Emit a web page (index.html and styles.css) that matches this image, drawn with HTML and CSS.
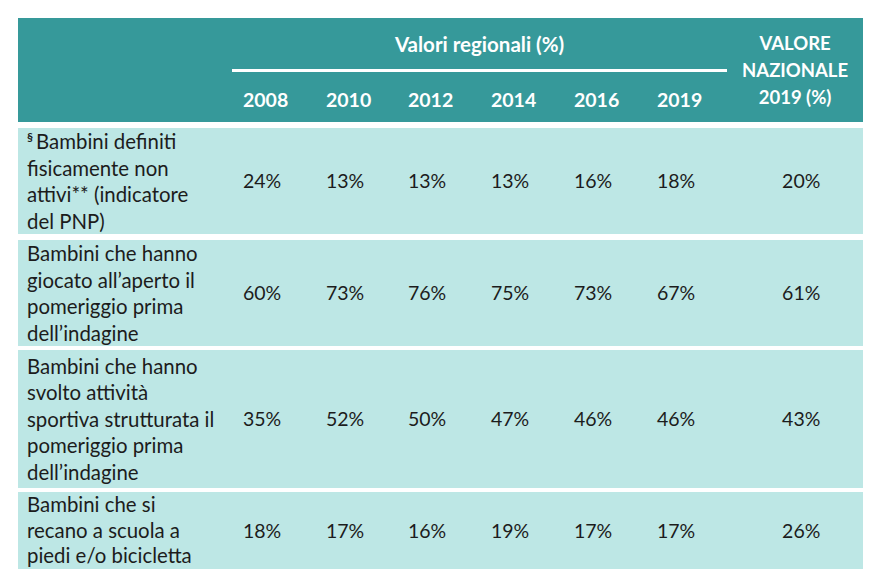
FILE: index.html
```html
<!DOCTYPE html>
<html lang="it">
<head>
<meta charset="utf-8">
<title>Tabella attività fisica</title>
<link rel="stylesheet" href="styles.css">
</head>
<body>
<table class="data">
  <colgroup>
    <col class="c-label">
    <col class="c-y1"><col class="c-y2"><col class="c-y3"><col class="c-y4"><col class="c-y5"><col class="c-y6">
    <col class="c-nat">
  </colgroup>
  <thead>
    <tr class="h-top">
      <th class="h-blank" rowspan="2"></th>
      <th class="h-group" colspan="6">Valori regionali (%)</th>
      <th class="h-nat" rowspan="2">VALORE<br>NAZIONALE<br>2019 (%)</th>
    </tr>
    <tr class="h-years">
      <th class="yr">2008</th>
      <th class="yr">2010</th>
      <th class="yr">2012</th>
      <th class="yr">2014</th>
      <th class="yr">2016</th>
      <th class="yr">2019</th>
    </tr>
  </thead>
  <tbody>
    <tr class="r1">
      <td class="lbl"><span class="sect">§</span><span class="lbl-text">Bambini definiti fisicamente non attivi** (indicatore del PNP)</span></td>
      <td class="val">24%</td><td class="val">13%</td><td class="val">13%</td><td class="val">13%</td><td class="val">16%</td><td class="val">18%</td>
      <td class="val nat">20%</td>
    </tr>
    <tr class="r2">
      <td class="lbl">Bambini che hanno giocato all’aperto il pomeriggio prima dell’indagine</td>
      <td class="val">60%</td><td class="val">73%</td><td class="val">76%</td><td class="val">75%</td><td class="val">73%</td><td class="val">67%</td>
      <td class="val nat">61%</td>
    </tr>
    <tr class="r3">
      <td class="lbl">Bambini che hanno svolto attività sportiva strutturata il pomeriggio prima dell’indagine</td>
      <td class="val">35%</td><td class="val">52%</td><td class="val">50%</td><td class="val">47%</td><td class="val">46%</td><td class="val">46%</td>
      <td class="val nat">43%</td>
    </tr>
    <tr class="r4">
      <td class="lbl">Bambini che si recano a scuola a piedi e/o bicicletta</td>
      <td class="val">18%</td><td class="val">17%</td><td class="val">16%</td><td class="val">19%</td><td class="val">17%</td><td class="val">17%</td>
      <td class="val nat">26%</td>
    </tr>
  </tbody>
</table>
</body>
</html>
```

FILE: styles.css
```css
html, body {
  margin: 0;
  padding: 0;
  background: #ffffff;
}

body {
  font-family: "Lato", "Open Sans", "Liberation Sans", sans-serif;
  color: #1c1c1c;
}

.data {
  margin: 18px 0 0 18px;
  width: 845px;
  table-layout: fixed;
  border-collapse: separate;
  border-spacing: 0;
}

.c-label { width: 214px; }
.c-y1 { width: 83px; }
.c-y2 { width: 82px; }
.c-y3 { width: 83px; }
.c-y4 { width: 83px; }
.c-y5 { width: 83px; }
.c-y6 { width: 81px; }
.c-nat { width: 136px; }

.data th,
.data td {
  padding: 0;
  vertical-align: middle;
}

.data thead th {
  background: #36999a;
  color: #ffffff;
  font-weight: 700;
}

.h-top { height: 54px; }
.h-years { height: 50px; }

.data .h-group {
  text-align: center;
  font-size: 20.5px;
  border-bottom: 3px solid #ffffff;
  padding-top: 1px;
}

.data .h-nat {
  text-align: center;
  font-size: 18.5px;
  line-height: 27px;
  padding-top: 1px;
}

.data .yr {
  text-align: left;
  font-size: 19.5px;
  padding-left: 11px;
  padding-top: 4px;
}

.data tbody td {
  background: #bde7e5;
  background-clip: padding-box;
  border-top: 6px solid #ffffff;
  line-height: 26.5px;
  text-align: left;
}

.r1 { height: 112px; }
.r2 { height: 112px; }
.r3 { height: 142px; }
.r4 { height: 81px; }

.data .r3 td,
.data .r4 td {
  border-top-width: 4px;
}

.data .r4 td {
  line-height: 25.5px;
}

.data td.lbl {
  font-size: 20.4px;
  padding-left: 9px;
  padding-right: 14px;
}

.data td.val {
  font-size: 19.5px;
  padding-left: 11px;
}

.data td.nat {
  padding-left: 55px;
}

.sect {
  display: inline-block;
  font-size: 12px;
  font-weight: 700;
  line-height: 12px;
  vertical-align: 8px;
  margin-right: 3px;
}
```
